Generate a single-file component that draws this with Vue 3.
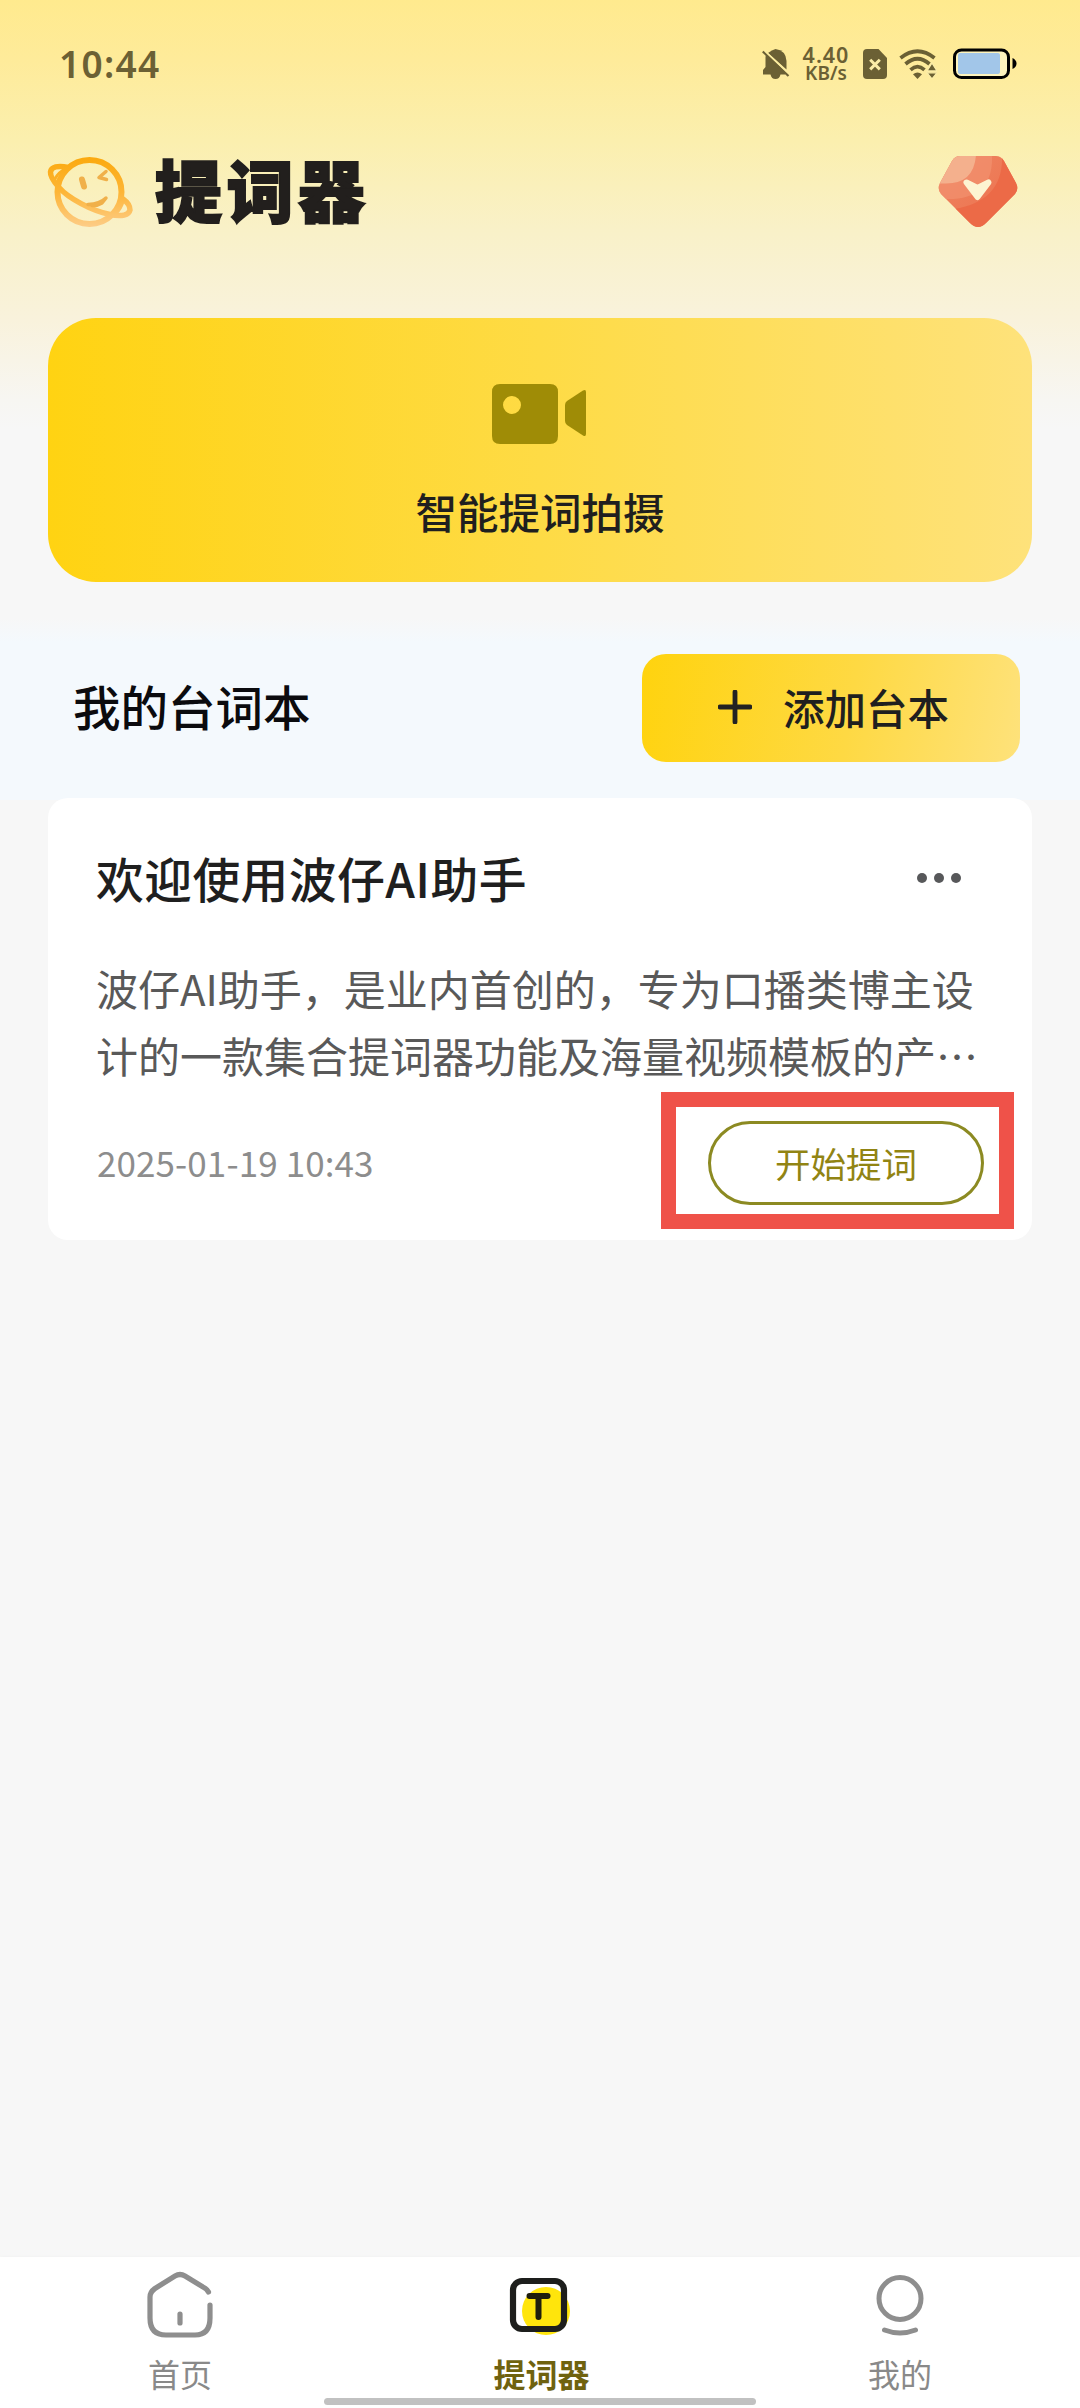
<script setup>
const script = {
  title: '欢迎使用波仔AI助手',
  lines: ['波仔AI助手，是业内首创的，专为口播类博主设', '计的一款集合提词器功能及海量视频模板的产…'],
  date: '2025-01-19 10:43',
}
</script>

<template>
  <div class="screen">
    <div class="status">
      <span class="clock">10:44</span>
      <div class="indicators">
        <svg class="bell" viewBox="0 0 28 30" width="28" height="30">
          <path d="M4 5.500 23 23V25.500H18.500Q17.500 30 13.500 30 9.500 30 8.500 25.500H1V21L3.500 18V8Z" fill="#6b6034" />
          <path d="M6 4Q10 1 13.500 0 24 1.500 24.500 12V20.500Z" fill="#6b6034" />
          <path d="M.8 2.500 26.500 27" stroke="#6b6034" stroke-width="2.200" />
          <path d="M3 2 27.500 25" stroke="#fceda0" stroke-width="1.400" />
        </svg>
        <div class="speed"><b>4.40</b><span>KB/s</span></div>
        <svg class="sim" viewBox="0 0 24 30" width="24" height="30">
          <path d="M4 0H15.500L24 9V26Q24 30 20 30H4Q0 30 0 26V4Q0 0 4 0Z" fill="#6b6034" />
          <path d="M7.200 10.800 16.800 20.400M16.800 10.800 7.200 20.400" stroke="#fbeda8" stroke-width="3" />
        </svg>
        <svg class="wifi" viewBox="0 0 38 30" width="38" height="30">
          <g fill="none" stroke="#6b6034" stroke-width="3.700">
            <path d="M1.500 9Q18.500-4.500 35.500 9" />
            <path d="M6.500 15Q18.500 4.500 30.500 15" />
            <path d="M11.500 20.800Q18.500 14.500 25.500 20.800" />
          </g>
          <path d="M14 25.200Q18.500 22 23 25.200L18.500 30Z" fill="#6b6034" />
          <path d="M28 22 33 14 38 22ZM28 23.800H38L33 30Z" fill="#6b6034" stroke="#fbeda8" stroke-width="1.300" />
        </svg>
        <svg class="battery" viewBox="0 0 66 32" width="66" height="32">
          <rect x="2.500" y="2" width="54" height="27.500" rx="7" fill="#fdf3bd" stroke="#000" stroke-width="3" />
          <rect x="6" y="5" width="42" height="21" rx="2" fill="#a2c6e9" />
          <path d="M60.500 10Q64.500 12 64.500 15.500T60.500 21Z" />
        </svg>
      </div>
    </div>

    <header class="header">
      <svg class="planet" viewBox="0 0 88 74" width="88" height="74">
        <defs>
          <linearGradient id="ring" x1="0" y1="0" x2="0" y2="74" gradientUnits="userSpaceOnUse">
            <stop offset="0" stop-color="#fba90c" />
            <stop offset=".5" stop-color="#fdb536" />
            <stop offset="1" stop-color="#fdce8c" />
          </linearGradient>
        </defs>
        <g fill="none" stroke="url(#ring)" stroke-width="6" stroke-linecap="round" stroke-linejoin="round">
          <circle cx="43.500" cy="37" r="32" />
          <path d="M22 12.500C12 10 5 12 4.500 17C4 22 9 28 13 32.500C22 43 46 56 64 59.500C76 62 83 60 84 55Q84 49 77 44" stroke-width="5.500" />
          <path d="M9 24Q12 17 22 12.500" stroke-width="3" />
          <path d="M69 59Q75 53 77 45" stroke-width="4" />
        </g>
        <g fill="none" stroke="#f0b04a" stroke-linecap="round" stroke-linejoin="round">
          <path d="M36 24.500 38 31.500" stroke-width="6" />
          <path d="M60 16.500 53 22.500 60.500 24.500" stroke-width="3.500" />
          <path d="M42 49.500Q54 49 60 43L56 48Q51 51 46 50.500" stroke-width="3.500" />
        </g>
      </svg>
      <h1>提词器</h1>
      <svg class="gem" viewBox="0 0 80 74" width="80" height="74">
        <defs>
          <clipPath id="gemShape"><path d="M22 1H58Q63 1 66 6L78 28Q81 34 77 39L48 68Q40 76 32 68L3 39Q-1 34 2 28L14 6Q17 1 22 1Z" /></clipPath>
          <linearGradient id="gemBase" x1="0" y1="0" x2="1" y2="1"><stop offset="0" stop-color="#ee8661" /><stop offset="1" stop-color="#ed6f4d" /></linearGradient>
        </defs>
        <g clip-path="url(#gemShape)">
          <rect width="80" height="74" fill="url(#gemBase)" />
          <path d="M64 0Q66 46 16 54L40 76 80 40V0Z" fill="#ec6a47" />
          <path d="M54 0Q56 46 6 44L0 37V0Z" fill="#f2926f" opacity=".7" />
          <path d="M38 0Q36 29 7 28.500H0V0Z" fill="#f4b08d" />
        </g>
        <path d="M28.500 27.500 39.500 33 50.500 27.500 39.500 42Z" fill="#fdf4d2" stroke="#fdf4d2" stroke-width="6" stroke-linejoin="round" />
      </svg>
    </header>

    <section class="hero">
      <svg viewBox="0 0 96 62" width="96" height="62">
        <path fill="#9f8c06" fill-rule="evenodd" d="M8 1H58Q66 1 66 9V53Q66 61 58 61H8Q0 61 0 53V9Q0 1 8 1ZM20 13A9 9 0 1 0 20 31 9 9 0 1 0 20 13Z" />
        <path fill="#9f8c06" d="M75 18 91 7.500Q94 6 94 9V51Q94 54 91 52.500L75 42Q73 40.500 73 38V22Q73 19.500 75 18Z" />
      </svg>
      <span>智能提词拍摄</span>
    </section>

    <section class="toolbar">
      <h2>我的台词本</h2>
      <div class="add">
        <svg viewBox="0 0 34 34" width="34" height="34"><path d="M17 2V32M2 17H32" stroke="#222" stroke-width="4.800" stroke-linecap="round" /></svg>
        <span>添加台本</span>
      </div>
    </section>

    <article class="card">
      <div class="card-head">
        <h3>{{ script.title }}</h3>
        <svg viewBox="0 0 46 12" width="46" height="12" fill="#57585a"><circle cx="6" cy="6" r="5" /><circle cx="23" cy="6" r="5" /><circle cx="40" cy="6" r="5" /></svg>
      </div>
      <div class="body">
        <p v-for="line in script.lines" :key="line">{{ line }}</p>
      </div>
      <div class="card-foot">
        <time>{{ script.date }}</time>
        <div class="highlight"><span class="start">开始提词</span></div>
      </div>
    </article>

    <nav class="tabs">
      <div class="tab">
        <svg viewBox="147 2270 66 70" width="66" height="70" fill="none" stroke="#8e8e8e" stroke-width="5.200" stroke-linecap="round">
          <path d="M208.500 2292Q207 2289 203 2287L185 2276Q180 2273 175 2276L155 2288.500Q150 2292 150 2297V2318Q150 2335 166 2335H195Q210 2335 210 2318V2305" />
          <path d="M180 2314V2323" />
        </svg>
        <span>首页</span>
      </div>
      <div class="tab active">
        <svg viewBox="507 2270 66 70" width="66" height="70" fill="none">
          <circle cx="546" cy="2311" r="24" fill="#ffe50c" />
          <rect x="513" y="2281" width="51" height="48" rx="9" stroke="#1d1e1c" stroke-width="6.200" />
          <path d="M529.500 2296H547.500M538.500 2297V2317" stroke="#1f1e0d" stroke-width="6" stroke-linecap="round" />
        </svg>
        <span>提词器</span>
      </div>
      <div class="tab">
        <svg viewBox="867 2270 66 70" width="66" height="70" fill="none" stroke="#8e8e8e" stroke-width="5">
          <circle cx="900" cy="2298.500" r="21" />
          <path d="M884.500 2330Q900 2336 915.500 2330" stroke-linecap="round" />
        </svg>
        <span>我的</span>
      </div>
      <i class="gesture"></i>
    </nav>
  </div>
</template>

<style>
body { margin: 0; background: #f7f7f7; }
</style>

<style scoped>
.screen {
  width: 1080px;
  height: 2408px;
  display: flex;
  flex-direction: column;
  overflow: hidden;
  font-family: "Noto Sans CJK SC", sans-serif;
  color: #1f1f1f;
  background: linear-gradient(180deg, #ffea8e 0, #feeb9a 60px, #fbefae 140px, #f9f1c8 230px, #f9f2dc 320px, #f7f6f2 400px, #f7f7f7 430px);
}
h1, h2, h3, p { margin: 0; font-weight: 500; }
svg { display: block; flex: none; }
.status {
  height: 128px;
  padding: 0 65px 0 59px;
  box-sizing: border-box;
  display: flex;
  justify-content: space-between;
  color: #6b6034;
  font-family: "Noto Sans", sans-serif;
}
.clock { font-size: 37px; font-weight: 600; line-height: 52px; margin-top: 38px; letter-spacing: 1.300px; }
.indicators { display: flex; height: 128px; align-items: center; }
.bell { margin-right: 11px; }
.speed { display: flex; flex-direction: column; align-items: center; width: 50px; margin-right: 12px; font-weight: 600; }
.speed b { font-size: 21.500px; line-height: 18px; font-weight: 600; letter-spacing: 1px; margin-top: -1px; }
.speed span { font-size: 19px; line-height: 18px; }
.sim { margin-right: 12px; }
.wifi { margin-right: 15px; }
.battery { margin-right: -3px; }
.header { height: 128px; padding: 0 62px 0 46px; display: flex; align-items: center; }
h1 {
  font-size: 67px;
  line-height: 80px;
  font-weight: 900;
  letter-spacing: 4.500px;
  margin: -9px 0 0 21px;
  color: #221f1d;
  -webkit-text-stroke: 2px #221f1d;
}
.gem { margin-left: auto; }
.hero {
  height: 264px;
  margin: 62px 48px 0;
  border-radius: 48px;
  background: linear-gradient(90deg, #ffd312, #fedb45 50%, #fee27b);
  display: flex;
  flex-direction: column;
  align-items: center;
  flex: none;
}
.hero svg { margin-top: 65px; }
.hero span { font-size: 41.500px; line-height: 60px; margin-top: 36px; font-weight: 500; }
.toolbar {
  height: 182px;
  margin-top: 36px;
  padding: 0 60px 0 73px;
  box-sizing: border-box;
  flex: none;
  display: flex;
  justify-content: space-between;
  background: linear-gradient(180deg, #f7f7f7 0, #f4f9fd 24px);
}
h2 { font-size: 47.500px; line-height: 70px; margin-top: 53px; color: #0b0b0e; }
.add {
  width: 378px;
  height: 108px;
  margin-top: 36px;
  box-sizing: border-box;
  padding-left: 76px;
  border-radius: 24px;
  display: flex;
  align-items: center;
  background: linear-gradient(100deg, #ffd30e, #fed943 55%, #fee27b);
}
.add svg { margin-top: -2px; }
.add span { margin: -2px 0 0 31px; font-size: 41.500px; font-weight: 500; }
.card {
  height: 442px;
  margin: -2px 48px 0;
  padding: 0 48px;
  box-sizing: border-box;
  flex: none;
  border-radius: 20px;
  background: #fff;
}
.card-head { display: flex; justify-content: space-between; align-items: center; height: 70px; padding: 45px 22px 0 0; }
h3 { font-size: 47.800px; line-height: 70px; white-space: nowrap; letter-spacing: .4px; }
.body { margin-top: 41px; }
.body p { font-size: 42px; line-height: 67px; font-weight: 400; color: #595959; white-space: nowrap; }
.card-foot { display: flex; justify-content: space-between; margin-right: -30px; }
time { font-size: 35px; line-height: 52px; margin: 48px 0 0 1px; color: #8d8d8d; letter-spacing: .1px; }
.highlight {
  width: 353px;
  height: 137px;
  margin-top: 4px;
  box-sizing: border-box;
  border: 15px solid #ef5249;
  display: flex;
  justify-content: flex-end;
  padding: 14px 15px 0 0;
}
.start {
  width: 276px;
  height: 84px;
  box-sizing: border-box;
  border: 3px solid #8c8a22;
  border-radius: 42px;
  text-align: center;
  font-size: 35.500px;
  line-height: 78px;
  color: #918413;
}
.tabs {
  position: relative;
  height: 151px;
  margin-top: auto;
  display: flex;
  flex: none;
  background: #fff;
  box-shadow: 0 0 4px rgba(0, 0, 0, .03);
}
.tab { width: 360px; display: flex; flex-direction: column; align-items: center; color: #898989; }
.tab svg { margin-top: 13px; }
.tab span { font-size: 32px; line-height: 48px; margin-top: 9px; }
.active span { font-weight: 700; color: #6f620f; padding-left: 3px; }
.gesture {
  position: absolute;
  left: 324px;
  bottom: 3px;
  width: 432px;
  height: 7px;
  border-radius: 4px;
  background: #c1c1c1;
}
</style>
